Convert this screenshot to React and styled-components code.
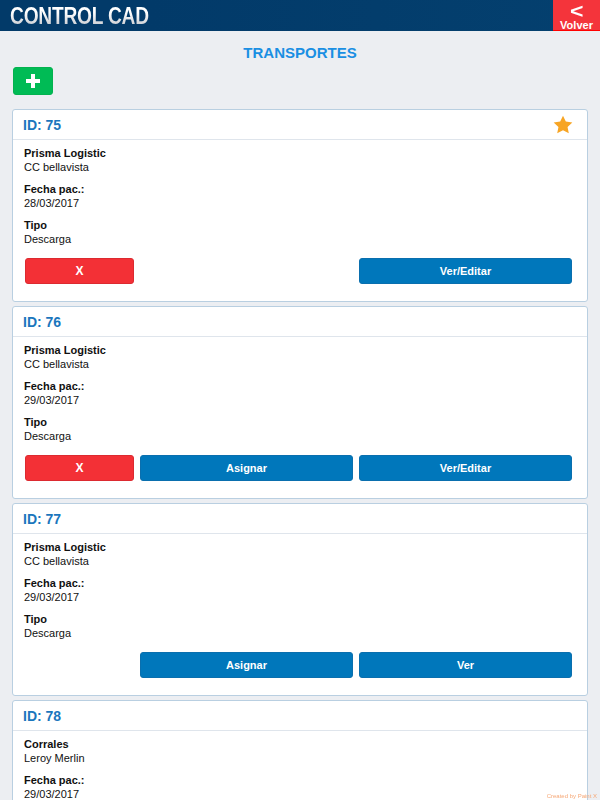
import styled, { createGlobalStyle } from "styled-components"

const Global = createGlobalStyle`
  html, body { margin: 0; padding: 0; }
  body {
    background: #eceef2;
    font-family: "Liberation Sans", Arial, sans-serif;
  }
`

const Page = styled.div`
  min-height: 100vh;
  background: #eceef2;
  position: relative;
`

const TopBar = styled.header`
  height: 31px;
  background: linear-gradient(90deg, #023a69 0%, #023a69 25%, #04406f 100%);
  display: flex;
  align-items: stretch;
  justify-content: space-between;
`

const Brand = styled.div`
  font-weight: 700;
  font-size: 24px;
  line-height: 31px;
  margin-left: 10px;
  letter-spacing: -0.3px;
  transform: scaleX(0.8);
  transform-origin: left center;
  background: linear-gradient(#ffffff 40%, #b4b8c0 100%);
  -webkit-background-clip: text;
  background-clip: text;
  color: transparent;
`

const BackButton = styled.button`
  width: 47px;
  border: none;
  border-bottom: 1px solid #ff0000;
  background: #f4343b;
  color: #fff;
  font-family: inherit;
  font-weight: 700;
  font-size: 11px;
  line-height: 12px;
  padding: 0;
  overflow: hidden;
  display: flex;
  flex-direction: column;
  align-items: center;
  justify-content: flex-start;
`

const Chevron = styled.span`
  display: block;
  font-size: 20px;
  line-height: 14px;
  height: 14px;
  margin: 4px 0 1px;
  transform: scaleX(1.15);
`

const Title = styled.h1`
  margin: 13px 0 0;
  text-align: center;
  color: #1a8fe3;
  font-size: 15px;
  font-weight: 700;
  line-height: 18px;
`

const Content = styled.main`
  padding: 0 12px 0 12px;
`

const AddButton = styled.button`
  margin: 5px 0 0 1px;
  width: 40px;
  height: 28px;
  border: 1px solid #03b24f;
  border-radius: 3px;
  background: #00bb55;
  display: flex;
  align-items: center;
  justify-content: center;
  padding: 0;
`

const List = styled.div`
  margin-top: 14px;
  display: flex;
  flex-direction: column;
  gap: 4px;
`

const Card = styled.section`
  background: #fff;
  border: 1px solid #b9cfe1;
  border-radius: 3px;
`

const CardHead = styled.div`
  height: 29px;
  border-bottom: 1px solid #dfe5ec;
  display: flex;
  align-items: center;
  justify-content: space-between;
  padding: 0 14px 0 10px;
`

const CardId = styled.h2`
  margin: 0;
  color: #1b76bd;
  font-size: 14px;
  font-weight: 700;
`

const CardBody = styled.div`
  padding: 6px 13px 17px 11px;
`

const Field = styled.div`
  font-size: 11px;
  line-height: 14px;
  color: #111;
  margin-bottom: 8px;
`

const Label = styled.div`
  font-weight: 700;
`

const Actions = styled.div`
  display: grid;
  grid-template-columns: 109px 213px 213px;
  column-gap: 6px;
  margin: 12px 0 0 1px;
`

const Btn = styled.button`
  grid-column: ${(p) => p.$col};
  height: 26px;
  border-radius: 3px;
  border: 1px solid ${(p) => (p.$danger ? "#dc2a30" : "#0a6fae")};
  background: ${(p) => (p.$danger ? "#f33036" : "#0077bb")};
  color: #fff;
  font-family: inherit;
  font-weight: 700;
  font-size: ${(p) => (p.$danger ? "12px" : "11px")};
  padding: 0;
`

const Credit = styled.span`
  position: fixed;
  right: 3px;
  bottom: 1px;
  font-size: 6px;
  color: #f6a877;
`

const Star = () => (
  <svg width="20" height="19" viewBox="0 0 24 23">
    <path
      d="M12 0.8l3.4 7.2 7.9 1-5.8 5.4 1.5 7.8L12 18.4l-7 3.8 1.5-7.8L0.7 9l7.9-1z"
      fill="#f7a525"
    />
  </svg>
)

const transports = [
  { id: 75, star: true, a: "Prisma Logistic", b: "CC bellavista", date: "28/03/2017", tipo: "Descarga", del: true, assign: false, view: "Ver/Editar" },
  { id: 76, a: "Prisma Logistic", b: "CC bellavista", date: "29/03/2017", tipo: "Descarga", del: true, assign: true, view: "Ver/Editar" },
  { id: 77, a: "Prisma Logistic", b: "CC bellavista", date: "29/03/2017", tipo: "Descarga", del: false, assign: true, view: "Ver" },
  { id: 78, a: "Corrales", b: "Leroy Merlin", date: "29/03/2017", tipo: "Descarga", del: true, assign: false, view: "Ver/Editar" },
]

const App = () => {
  return (
    <Page>
      <Global />
      <TopBar>
        <Brand>CONTROL CAD</Brand>
        <BackButton>
          <Chevron>&lt;</Chevron>
          Volver
        </BackButton>
      </TopBar>
      <Title>TRANSPORTES</Title>
      <Content>
        <AddButton>
          <svg width="16" height="16" viewBox="0 0 16 16">
            <path d="M6 1h4v5h5v4h-5v5H6v-5H1V6h5z" fill="#fff" />
          </svg>
        </AddButton>
        <List>
          {transports.map((t) => (
            <Card key={t.id}>
              <CardHead>
                <CardId>ID: {t.id}</CardId>
                {t.star && <Star />}
              </CardHead>
              <CardBody>
                <Field>
                  <Label>{t.a}</Label>
                  {t.b}
                </Field>
                <Field>
                  <Label>Fecha pac.:</Label>
                  {t.date}
                </Field>
                <Field>
                  <Label>Tipo</Label>
                  {t.tipo}
                </Field>
                <Actions>
                  {t.del && <Btn $danger $col={1}>X</Btn>}
                  {t.assign && <Btn $col={2}>Asignar</Btn>}
                  <Btn $col={3}>{t.view}</Btn>
                </Actions>
              </CardBody>
            </Card>
          ))}
        </List>
      </Content>
      <Credit>Created by Paint X</Credit>
    </Page>
  )
}

export default App
